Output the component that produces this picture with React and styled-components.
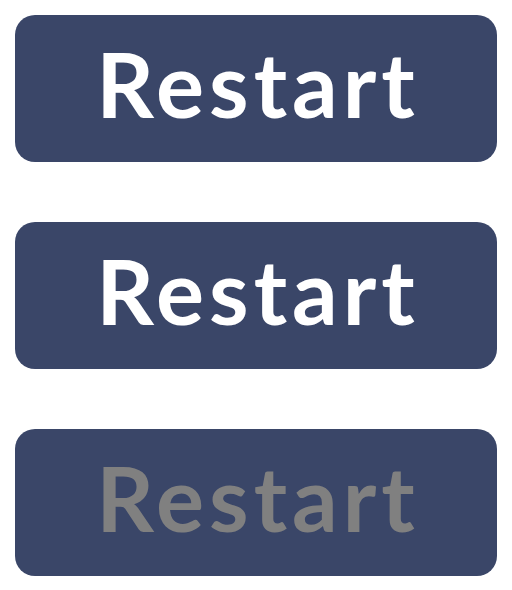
import React from "react";
import styled, { createGlobalStyle } from "styled-components";

const Global = createGlobalStyle`
  html, body { margin: 0; padding: 0; background: #ffffff; }
`;

const Stack = styled.div`
  display: flex;
  flex-direction: column;
  gap: 60px;
  padding: 15px;
  width: 482px;
`;

const Button = styled.button`
  display: flex;
  align-items: center;
  justify-content: center;
  width: 482px;
  height: 147px;
  border: none;
  border-radius: 20px;
  background: #3a4668;
  padding: 0 0 12px 4px;
  font-family: "Lato", "Open Sans", sans-serif;
  font-weight: 700;
  font-size: 90px;
  letter-spacing: 5px;
  color: ${(p) => (p.$disabled ? "#808080" : "#ffffff")};
  cursor: pointer;
`;

export default function App() {
  return (
    <>
      <Global />
      <Stack>
        <Button>Restart</Button>
        <Button>Restart</Button>
        <Button $disabled>Restart</Button>
      </Stack>
    </>
  );
}
